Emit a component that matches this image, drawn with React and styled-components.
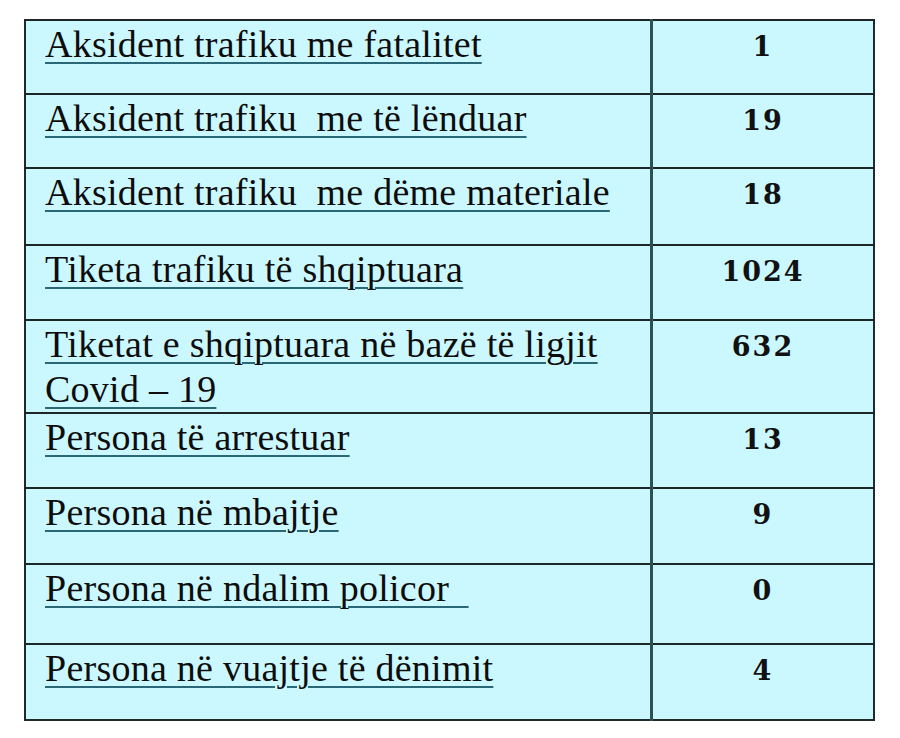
import React from 'react';
import styled, { createGlobalStyle } from 'styled-components';

const GlobalStyle = createGlobalStyle`
  html, body {
    margin: 0;
    padding: 0;
    background: #ffffff;
  }
`;

const Page = styled.div`
  width: 900px;
  height: 738px;
  padding: 19px 0 0 24px;
  box-sizing: border-box;
`;

const Table = styled.table`
  width: 851px;
  border-collapse: collapse;
  background: #cbf8fe;
  border: 2px solid #1f2a2a;
  font-family: "Liberation Serif", "Times New Roman", serif;
`;

const Row = styled.tr`
  height: ${props => props.h}px;
  border-top: 2px solid #1d2626;
`;

const LabelCell = styled.td`
  width: 605px;
  padding: 0 0 0 19px;
  vertical-align: top;
  border-right: 3px solid #2d5254;
`;

const Label = styled.span`
  display: inline-block;
  font-size: 38px;
  line-height: 45px;
  letter-spacing: 0.25px;
  color: #0d0d0d;
  text-decoration: underline;
  text-decoration-color: #2a6878;
  text-decoration-thickness: 2px;
  text-underline-offset: 5px;
  white-space: pre-wrap;
  margin-top: 1px;
`;

const ValueCell = styled.td`
  text-align: center;
  vertical-align: top;
  padding: 0;
`;

const Value = styled.span`
  display: inline-block;
  font-family: "DejaVu Serif", "Liberation Serif", serif;
  font-weight: bold;
  font-size: 27px;
  line-height: 45px;
  letter-spacing: 2px;
  color: #111111;
  margin-top: 3px;
`;

const rows = [
  { label: 'Aksident trafiku me fatalitet', value: '1', h: 74 },
  { label: 'Aksident trafiku  me të lënduar', value: '19', h: 74 },
  { label: 'Aksident trafiku  me dëme materiale', value: '18', h: 77 },
  { label: 'Tiketa trafiku të shqiptuara', value: '1024', h: 75 },
  { label: 'Tiketat e shqiptuara në bazë të ligjit\nCovid – 19', value: '632', h: 93 },
  { label: 'Persona të arrestuar', value: '13', h: 75 },
  { label: 'Persona në mbajtje', value: '9', h: 76 },
  { label: 'Persona në ndalim policor  ', value: '0', h: 80 },
  { label: 'Persona në vuajtje të dënimit', value: '4', h: 76 },
];

export default function App() {
  return (
    <>
      <GlobalStyle />
      <Page>
        <Table>
          <tbody>
            {rows.map((r, i) => (
              <Row key={i} h={r.h}>
                <LabelCell>
                  <Label>{r.label}</Label>
                </LabelCell>
                <ValueCell>
                  <Value>{r.value}</Value>
                </ValueCell>
              </Row>
            ))}
          </tbody>
        </Table>
      </Page>
    </>
  );
}
